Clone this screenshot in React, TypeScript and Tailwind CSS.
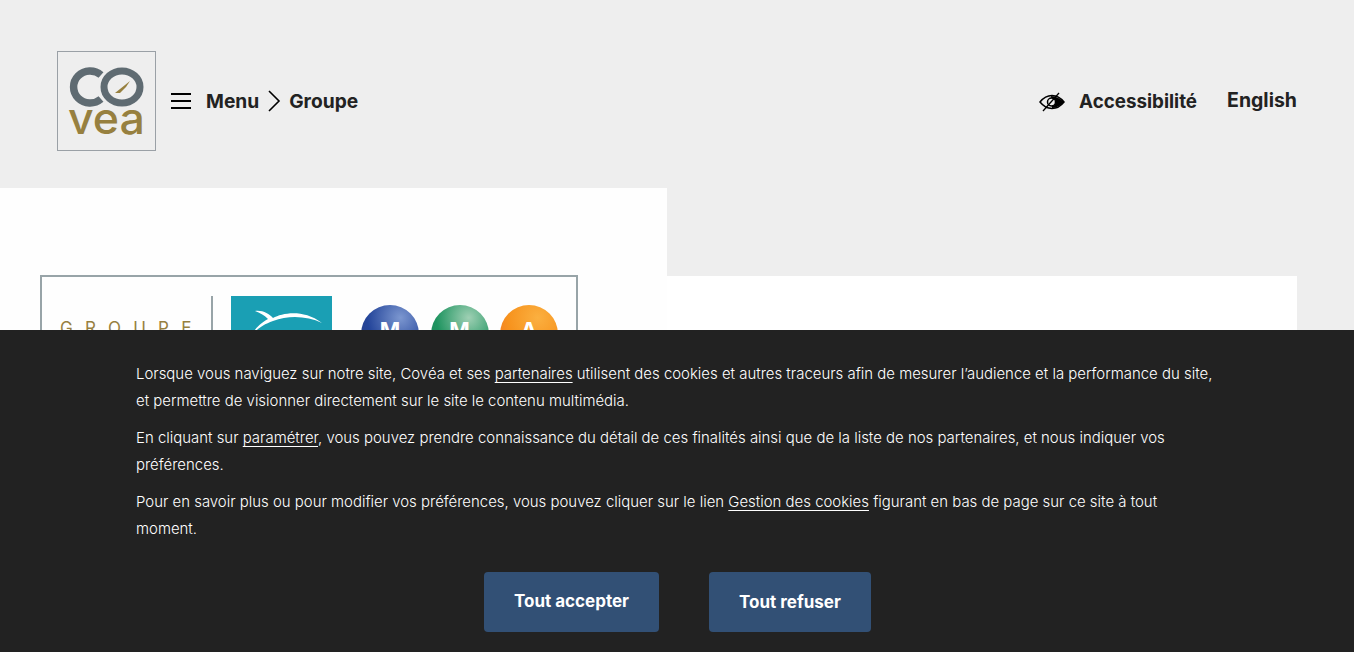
function Circle({ bg, letter }: { bg: string; letter: string }) {
  return (
    <div className={`flex h-[58px] w-[58px] items-start justify-center rounded-full pt-[12px] text-[22px] leading-[26px] ${bg}`}>
      {letter}
    </div>
  );
}

export default function App() {
  const font = { fontFamily: '"Inter","Liberation Sans",sans-serif' };
  const link = "underline underline-offset-[3px]";
  return (
    <div style={font} className="relative h-[652px] w-[1366px] overflow-hidden bg-white">
      <div className="h-[652px] w-[1354px] bg-[#eeeeee]">
        <header className="flex h-[188px] items-center justify-between px-[57px] pt-[14px]">
          <div className="flex items-center">
            <div className="h-[100px] w-[99px] border border-[#9aa0a6]">
              <svg viewBox="0 0 97 98" className="h-full w-full">
                <path d="M43 23 A16.5 16 0 1 0 43 47" fill="none" stroke="#5f6b72" strokeWidth="7.5" />
                <ellipse cx="64" cy="35" rx="18" ry="16" fill="none" stroke="#5f6b72" strokeWidth="7" />
                <path d="M57 41 L72 29 L68 35 L62 41 Z" fill="#97803f" />
                <text x="10" y="82" fontSize="44" fontWeight="500" fill="#97803f" fontFamily="Inter" textLength="77" lengthAdjust="spacingAndGlyphs">vea</text>
              </svg>
            </div>
            <svg width="20" height="16" viewBox="0 0 20 16" className="ml-[15px]">
              <path d="M0 1h20M0 8h20M0 15h20" stroke="#000" strokeWidth="2" />
            </svg>
            <span className="ml-[15px] text-[19.2px] font-bold text-[#222222]">Menu</span>
            <svg width="14" height="22" viewBox="0 0 14 22" className="ml-[8px]">
              <path d="M2 1l10 10L2 21" fill="none" stroke="#000" strokeWidth="1.6" />
            </svg>
            <span className="ml-[8px] text-[19.2px] font-bold text-[#222222]">Groupe</span>
          </div>
          <div className="flex items-center">
            <svg width="26" height="20" viewBox="0 0 26 20" className="mt-[2px]">
              <path d="M1 10C5 5 9 3.5 13 3.5S21 5 25 10C21 15 17 16.5 13 16.5S5 15 1 10Z" fill="none" stroke="#000" strokeWidth="1.5" />
              <path d="M12 4C17 4 21 6.5 25 10C21 14 17 16 13 16Z" fill="#000" />
              <circle cx="12.5" cy="10" r="4" fill="#eeeeee" stroke="#000" strokeWidth="1.5" />
              <path d="M20 1L4 19" stroke="#000" strokeWidth="1.3" />
            </svg>
            <span className="ml-[14px] mt-[2px] text-[18.8px] font-bold text-[#222222]">Accessibilité</span>
            <span className="ml-[30px] text-[19.5px] font-bold text-[#222222]">English</span>
          </div>
        </header>
        <main className="flex pr-[57px]">
          <div className="h-[464px] w-[667px] bg-[#fefefe] pl-[40px] pt-[87px]">
            <div className="flex h-[200px] w-[538px] border-2 border-[#98a4a8] pl-[18px] pt-[19px]">
              <div className="w-[151px] pt-[19px] text-[17px] leading-[26px] tracking-[12.2px] text-[#97803f]">GROUPE</div>
              <div className="h-[100px] w-[2px] bg-[#98a4a8]" />
              <div className="ml-[18px] h-[100px] w-[101px] bg-[#1a9fb4]">
                <svg viewBox="0 0 101 100" className="h-full w-full">
                  <path d="M24 15C32 14 38 18 42 22C52 17 72 13 91 27C76 20 58 19 42 25C34 28 28 31 22 38C24 32 30 27 37 23C33 19 29 17 24 15Z" fill="#fff" />
                </svg>
              </div>
              <div className="ml-[29px] mt-[9px] flex gap-[11.5px] font-bold text-white">
                <Circle bg="bg-[radial-gradient(circle_at_68%_22%,#7c97d0,#24459a_55%,#2c3a78)]" letter="M" />
                <Circle bg="bg-[radial-gradient(circle_at_65%_22%,#9fd0b4,#1f9460_55%,#1c7d55)]" letter="M" />
                <Circle bg="bg-[radial-gradient(circle_at_65%_22%,#fbb040,#f7931e_50%,#ee6a2b)]" letter="A" />
              </div>
            </div>
          </div>
          <div className="mt-[88px] h-[376px] flex-1 bg-white" />
        </main>
      </div>
      <div className="absolute bottom-0 left-0 h-[322px] w-[1354px] bg-[#222222] pl-[136px] pr-[138px] pt-[31px] text-[14.95px] font-light leading-[27px] text-white">
        <p className="mb-[10px]">Lorsque vous naviguez sur notre site, Covéa et ses <span className={link}>partenaires</span> utilisent des cookies et autres traceurs afin de mesurer l’audience et la performance du site, et permettre de visionner directement sur le site le contenu multimédia.</p>
        <p className="mb-[10px]">En cliquant sur <span className={link}>paramétrer</span>, vous pouvez prendre connaissance du détail de ces finalités ainsi que de la liste de nos partenaires, et nous indiquer vos préférences.</p>
        <p>Pour en savoir plus ou pour modifier vos préférences, vous pouvez cliquer sur le lien <span className={link}>Gestion des cookies</span> figurant en bas de page sur ce site à tout moment.</p>
        <div className="mt-[29px] flex justify-center gap-[50px] pl-[3px]">
          <button className="h-[60px] w-[175px] rounded bg-[#325075] pb-[1px] text-[17px] font-bold">Tout accepter</button>
          <button className="h-[60px] w-[162px] rounded bg-[#325075] text-[17px] font-bold">Tout refuser</button>
        </div>
      </div>
    </div>
  );
}
